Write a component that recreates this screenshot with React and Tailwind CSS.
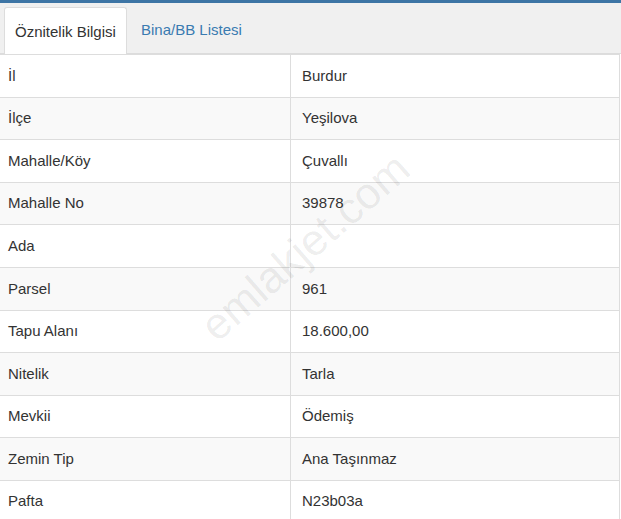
import React from 'react';

const rows = [
    ['İl', 'Burdur'],
    ['İlçe', 'Yeşilova'],
    ['Mahalle/Köy', 'Çuvallı'],
    ['Mahalle No', '39878'],
    ['Ada', ''],
    ['Parsel', '961'],
    ['Tapu Alanı', '18.600,00'],
    ['Nitelik', 'Tarla'],
    ['Mevkii', 'Ödemiş'],
    ['Zemin Tip', 'Ana Taşınmaz'],
    ['Pafta', 'N23b03a'],
];

const App = () => {
    return (
        <div className="relative w-[621px] h-[519px] overflow-hidden bg-white text-[#333] text-[15px]" style={{ fontFamily: '"Liberation Sans", Arial, sans-serif' }}>
            <div className="h-[3px] bg-[#3d75a5]" />

            {/* tabs */}
            <div className="h-[51px] bg-[#f0f0f0] border-b border-[#dcdcdc] flex items-end pl-[4px]">
                <div className="h-[47px] w-[123px] bg-white border border-b-0 border-[#dddddd] rounded-t-[3px] flex items-center pl-[10px] pt-[3px] -mb-px">
                    Öznitelik Bilgisi
                </div>
                <div className="h-[47px] flex items-center pl-[14px] pt-[2px] text-[#3a7bb0]">
                    Bina/BB Listesi
                </div>
            </div>

            {/* table */}
            <div className="border-r border-[#dddddd] mr-[1px]">
                {rows.map(([label, value], i) => (
                    <div
                        key={label}
                        className={`flex h-[42.6px] border-t border-[#dddddd] ${i % 2 === 1 ? 'bg-[#f9f9f9]' : 'bg-white'}`}
                    >
                        <div className="w-[291px] pl-[8px] flex items-center border-r border-[#dddddd]">{label}</div>
                        <div className="flex-1 pl-[11px] flex items-center">{value}</div>
                    </div>
                ))}
            </div>

            {/* watermark */}
            <div className="absolute left-[175px] top-[225px] w-[260px] text-center text-[44px] text-black/[0.08] -rotate-[41deg] pointer-events-none select-none leading-none">
                emlakjet.com
            </div>
        </div>
    );
};

export default App;
